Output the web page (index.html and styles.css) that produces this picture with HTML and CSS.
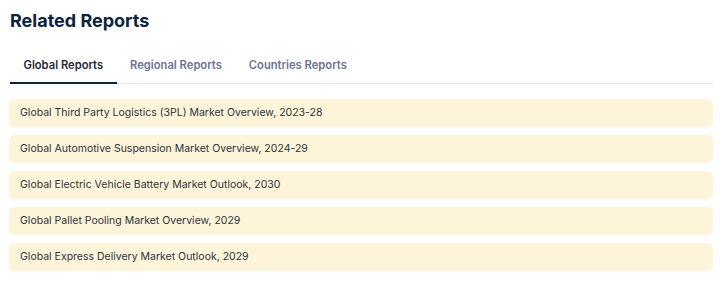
FILE: index.html
```html
<!DOCTYPE html>
<html>
<head>
<meta charset="utf-8">
<link rel="stylesheet" href="styles.css">
</head>
<body>
<section class="related">
  <h2 class="title">Related Reports</h2>
  <div class="tabs">
    <div class="tab active">Global Reports</div>
    <div class="tab">Regional Reports</div>
    <div class="tab">Countries Reports</div>
  </div>
  <ul class="list">
    <li class="item">Global Third Party Logistics (3PL) Market Overview, 2023-28</li>
    <li class="item">Global Automotive Suspension Market Overview, 2024-29</li>
    <li class="item">Global Electric Vehicle Battery Market Outlook, 2030</li>
    <li class="item">Global Pallet Pooling Market Overview, 2029</li>
    <li class="item">Global Express Delivery Market Outlook, 2029</li>
  </ul>
</section>
</body>
</html>
```
FILE: styles.css
```css
html, body {
  margin: 0;
  padding: 0;
  background: #ffffff;
}
body {
  font-family: Inter, "Noto Sans", sans-serif;
}
.related {
  width: 704px;
  padding: 9px 0 0 9px;
}
.title {
  margin: 0 0 0 1px;
  font-size: 18px;
  line-height: 24px;
  font-weight: 700;
  color: #0c2340;
}
.tabs {
  display: flex;
  margin-top: 18px;
  border-bottom: 1px solid #e5e7eb;
  padding-left: 1px;
}
.tab {
  padding: 6px 13.5px 9px;
  font-size: 11.2px;
  line-height: 16px;
  font-weight: 600;
  color: #6b7590;
  border-bottom: 2px solid transparent;
  margin-bottom: -1px;
}
.tab.active {
  color: #1f2937;
  border-bottom-color: #0c2340;
}
.list {
  list-style: none;
  margin: 15px 0 0;
  padding: 0;
  display: flex;
  flex-direction: column;
  gap: 8px;
}
.item {
  background: #fef4d9;
  border-radius: 5px;
  height: 28px;
  line-height: 28px;
  padding-left: 11px;
  font-size: 10.5px;
  color: #2d3340;
}
```
